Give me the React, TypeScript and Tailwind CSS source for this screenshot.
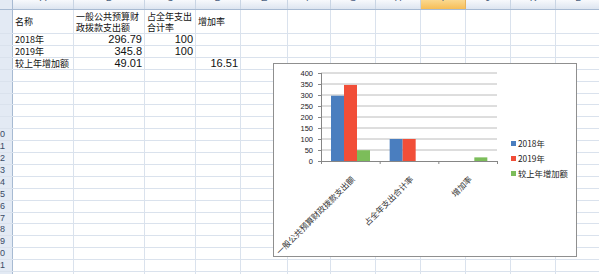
import React from "react";

const CJK = "font-['Noto_Sans_CJK_SC','Noto_Sans',sans-serif]";
const NUM = "font-['Liberation_Sans',Arial,sans-serif]";

const COLS = [
  { l: "A", w: "w-[61px]" },
  { l: "B", w: "w-[71px]" },
  { l: "C", w: "w-[51px]" },
  { l: "D", w: "w-[45px]" },
  { l: "E", w: "w-[47px]" },
  { l: "F", w: "w-[43px]" },
  { l: "G", w: "w-[45px]" },
  { l: "H", w: "w-[45px]" },
  { l: "I", w: "w-[45px]" },
  { l: "J", w: "w-[45px]" },
  { l: "K", w: "w-[45px]" },
  { l: "L", w: "w-[45px]" },
];

const ROW_H = [
  "h-[24px]", "h-[12px]", "h-[12px]", "h-[12px]", "h-[12px]", "h-[12px]", "h-[11px]",
  "h-[12px]", "h-[12px]", "h-[12px]", "h-[12px]", "h-[12px]", "h-[12px]", "h-[12px]",
  "h-[12px]", "h-[12px]", "h-[11px]", "h-[12px]", "h-[12px]", "h-[12px]", "h-[12px]",
  "h-[12px]",
];

type Cell = { t: React.ReactNode; num?: boolean };

const DATA: Record<number, Record<number, Cell>> = {
  0: {
    0: { t: "名称" },
    1: { t: (<><div>一般公共预算财</div><div>政拨款支出额</div></>) },
    2: { t: (<><div>占全年支出</div><div>合计率</div></>) },
    3: { t: "增加率" },
  },
  1: { 0: { t: "2018年" }, 1: { t: "296.79", num: true }, 2: { t: "100", num: true } },
  2: { 0: { t: "2019年" }, 1: { t: "345.8", num: true }, 2: { t: "100", num: true } },
  3: { 0: { t: "较上年增加额" }, 1: { t: "49.01", num: true }, 3: { t: "16.51", num: true } },
};

function HeaderRow() {
  return (
    <div className="flex h-[10px] border-b border-[#a7bad2] bg-gradient-to-b from-[#f7f9fc] to-[#dde5f0]">
      <div className="w-[13px] h-full shrink-0 border-r border-[#a7bad2] bg-[#e3eaf4]" />
      {COLS.map((c) => (
        <div
          key={c.l}
          className={`${c.w} h-full shrink-0 overflow-hidden border-r flex justify-center ${
            c.l === "I"
              ? "bg-gradient-to-b from-[#fbd98f] to-[#f6bd55] border-[#e8b35a]"
              : "border-[#c9d5e4]"
          }`}
        >
          <span className={`${NUM} text-[10px] leading-[10px] -mt-[7px] text-[#4b5f80]`}>{c.l}</span>
        </div>
      ))}
    </div>
  );
}

function Row({ idx }: { idx: number }) {
  const n = idx + 1;
  const cells = DATA[idx] || {};
  return (
    <div className={`flex ${ROW_H[idx]} border-b border-[#dae2ed]`}>
      <div className="w-[13px] h-full shrink-0 overflow-hidden border-r border-[#a7bad2] bg-[#e3eaf4] flex items-center">
        <div className={`${NUM} w-[30px] -ml-[25px] shrink-0 text-right text-[9px] leading-none text-[#3a4a66]`}>
          {n >= 10 ? n : ""}
        </div>
      </div>
      {COLS.map((c, ci) => {
        const cell = cells[ci];
        return (
          <div
            key={c.l}
            className={`${c.w} h-full shrink-0 overflow-hidden border-r border-[#dae2ed] flex items-center px-[2px] ${
              cell?.num ? "justify-end" : "justify-start"
            }`}
          >
            {cell ? (
              cell.num ? (
                <span className={`${NUM} text-[11px] leading-none text-[#111]`}>{cell.t}</span>
              ) : (
                <div className={`${CJK} text-[9px] leading-[11px] text-[#111] whitespace-nowrap`}>{cell.t}</div>
              )
            ) : null}
          </div>
        );
      })}
    </div>
  );
}

const SERIES = [
  { name: "2018年", color: "#4a7ebf", values: [296.79, 100, 0] },
  { name: "2019年", color: "#f14e38", values: [345.8, 100, 0] },
  { name: "较上年增加额", color: "#7cbd5a", values: [49.01, 0, 16.51] },
];
const CATS = ["一般公共预算财政拨款支出额", "占全年支出合计率", "增加率"];

function Chart() {
  const x0 = 48;
  const x1 = 224;
  const y0 = 98;
  const scale = 0.22;
  const cw = (x1 - x0) / 3;
  const grid = [50, 100, 150, 200, 250, 300, 350, 400];
  return (
    <div className="absolute left-[273px] top-[63px] w-[304px] h-[194px] border border-[#8f8f8f] bg-white">
      <svg width="302" height="192" viewBox="1 1 302 192" className="block">
        {grid.map((g) => (
          <line key={g} x1={x0} x2={x1} y1={y0 - g * scale} y2={y0 - g * scale} stroke="#bcbcbc" strokeWidth="1" />
        ))}
        {[0, ...grid].map((g) => (
          <g key={"t" + g}>
            <line x1={x0 - 3} x2={x0} y1={y0 - g * scale + 0.5} y2={y0 - g * scale + 0.5} stroke="#868686" />
            <text
              x={40}
              y={y0 - g * scale + 3}
              textAnchor="end"
              fontSize="7.5"
              fontFamily="'Liberation Sans', Arial, sans-serif"
              fill="#222"
            >
              {g}
            </text>
          </g>
        ))}
        {CATS.map((_, ci) =>
          SERIES.map((s, si) => {
            const v = s.values[ci];
            if (!v) return null;
            const h = v * scale;
            return (
              <rect key={ci + "-" + si} x={x0 + ci * cw + 10 + si * 13} y={y0 - h} width={13} height={h} fill={s.color} />
            );
          })
        )}
        <line x1={x0 + 0.5} x2={x0 + 0.5} y1={y0 - 400 * scale} y2={y0} stroke="#868686" />
        <line x1={x0} x2={x1} y1={y0 + 0.5} y2={y0 + 0.5} stroke="#868686" />
        {[0, 1, 2, 3].map((i) => (
          <line key={"xt" + i} x1={x0 + i * cw + 0.5} x2={x0 + i * cw + 0.5} y1={y0} y2={y0 + 3} stroke="#868686" />
        ))}
        {CATS.map((c, ci) => {
          const ax = x0 + ci * cw + cw / 2 + 5;
          const ay = 117;
          return (
            <text
              key={c}
              x={ax}
              y={ay}
              textAnchor="end"
              fontSize="8.2"
              fontFamily="'Noto Sans CJK SC', sans-serif"
              fill="#333"
              transform={`rotate(-45 ${ax} ${ay})`}
            >
              {c}
            </text>
          );
        })}
        {SERIES.map((s, si) => (
          <g key={s.name}>
            <rect x={238} y={78 + si * 15} width={5} height={5} fill={s.color} />
            <text
              x={245}
              y={83.5 + si * 15}
              fontSize="8.3"
              fontFamily="'Noto Sans CJK SC', sans-serif"
              fill="#222"
            >
              {s.name}
            </text>
          </g>
        ))}
      </svg>
    </div>
  );
}

export default function App() {
  return (
    <div className="relative w-[599px] h-[274px] overflow-hidden bg-white">
      <div className="w-[613px]">
        <HeaderRow />
        {ROW_H.map((_, i) => (
          <Row key={i} idx={i} />
        ))}
      </div>
      <Chart />
    </div>
  );
}
